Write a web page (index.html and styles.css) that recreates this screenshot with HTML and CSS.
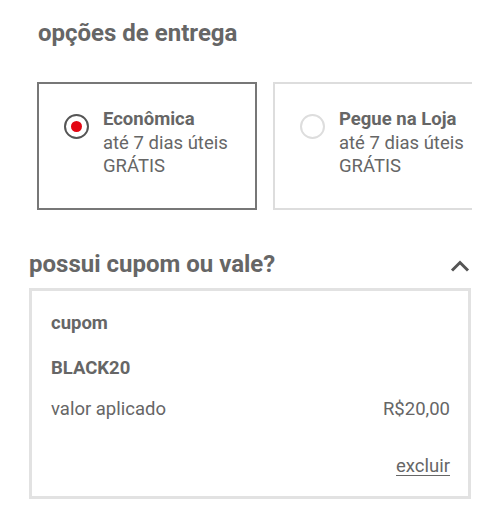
FILE: index.html
```html
<!DOCTYPE html>
<html lang="pt-BR">
<head>
<meta charset="utf-8">
<link rel="stylesheet" href="styles.css">
</head>
<body>
<section class="delivery">
  <h2 class="title">opções de entrega</h2>
  <div class="options">
    <div class="option selected">
      <span class="radio"><span class="dot"></span></span>
      <div class="option-text">
        <div class="option-name">Econômica</div>
        <div>até 7 dias úteis</div>
        <div>GRÁTIS</div>
      </div>
    </div>
    <div class="option">
      <span class="radio"></span>
      <div class="option-text">
        <div class="option-name">Pegue na Loja</div>
        <div>até 7 dias úteis</div>
        <div>GRÁTIS</div>
      </div>
    </div>
  </div>
</section>
<section class="coupon">
  <div class="coupon-head">
    <h2 class="title">possui cupom ou vale?</h2>
    <svg class="chevron" width="20" height="12" viewBox="0 0 20 12"><path d="M2 10.5 L10 2.5 L18 10.5" fill="none" stroke="#555" stroke-width="3"/></svg>
  </div>
  <div class="coupon-box">
    <div class="label">cupom</div>
    <div class="code">BLACK20</div>
    <div class="row"><span>valor aplicado</span><span>R$20,00</span></div>
    <div class="actions"><a class="remove" href="#">excluir</a></div>
  </div>
</section>
</body>
</html>
```

FILE: styles.css
```css
* { box-sizing: border-box; }
body {
  margin: 0;
  background: #fff;
  font-family: Roboto, "Liberation Sans", sans-serif;
  color: #666;
  width: 500px;
}
.title {
  margin: 0;
  font-size: 24px;
  font-weight: 700;
  color: #666;
  line-height: 28px;
}
.delivery {
  padding: 19px 28px 0 38px;
}
.options {
  margin-top: 35px;
  margin-left: -1px;
  display: flex;
  gap: 16px;
  overflow: hidden;
}
.option {
  flex: 0 0 220px;
  height: 128px;
  border: 2px solid #ddd;
  display: flex;
  align-items: flex-start;
  padding: 24px 0 0 25px;
  gap: 14px;
}
.option.selected { border-color: #777; }
.radio {
  flex: 0 0 25px;
  width: 25px;
  height: 25px;
  margin-top: 6px;
  border-radius: 50%;
  border: 2px solid #ddd;
  display: flex;
  align-items: center;
  justify-content: center;
}
.selected .radio { border-color: #555; }
.dot {
  width: 11px;
  height: 11px;
  border-radius: 50%;
  background: #e30613;
}
.option-text {
  font-size: 18.5px;
  line-height: 23.5px;
  white-space: nowrap;
  color: #666;
}
.option-name { font-weight: 700; }
.coupon {
  padding: 40px 29px 0 29px;
}
.coupon-head {
  display: flex;
  justify-content: space-between;
  align-items: center;
  height: 28px;
}
.chevron { margin-top: 4px; margin-right: 1px; }
.coupon-box {
  margin-top: 10px;
  border: 3px solid #e2e2e2;
  height: 211px;
  padding: 20px 18px 0 19px;
  font-size: 18.5px;
  color: #666;
}
.label, .code {
  font-weight: 700;
  line-height: 24px;
}
.code { margin-top: 21px; }
.row {
  margin-top: 17px;
  display: flex;
  justify-content: space-between;
  line-height: 24px;
}
.actions {
  margin-top: 33px;
  text-align: right;
  line-height: 24px;
}
.remove {
  color: #666;
  text-decoration: underline;
  text-underline-offset: 3px;
}
```
